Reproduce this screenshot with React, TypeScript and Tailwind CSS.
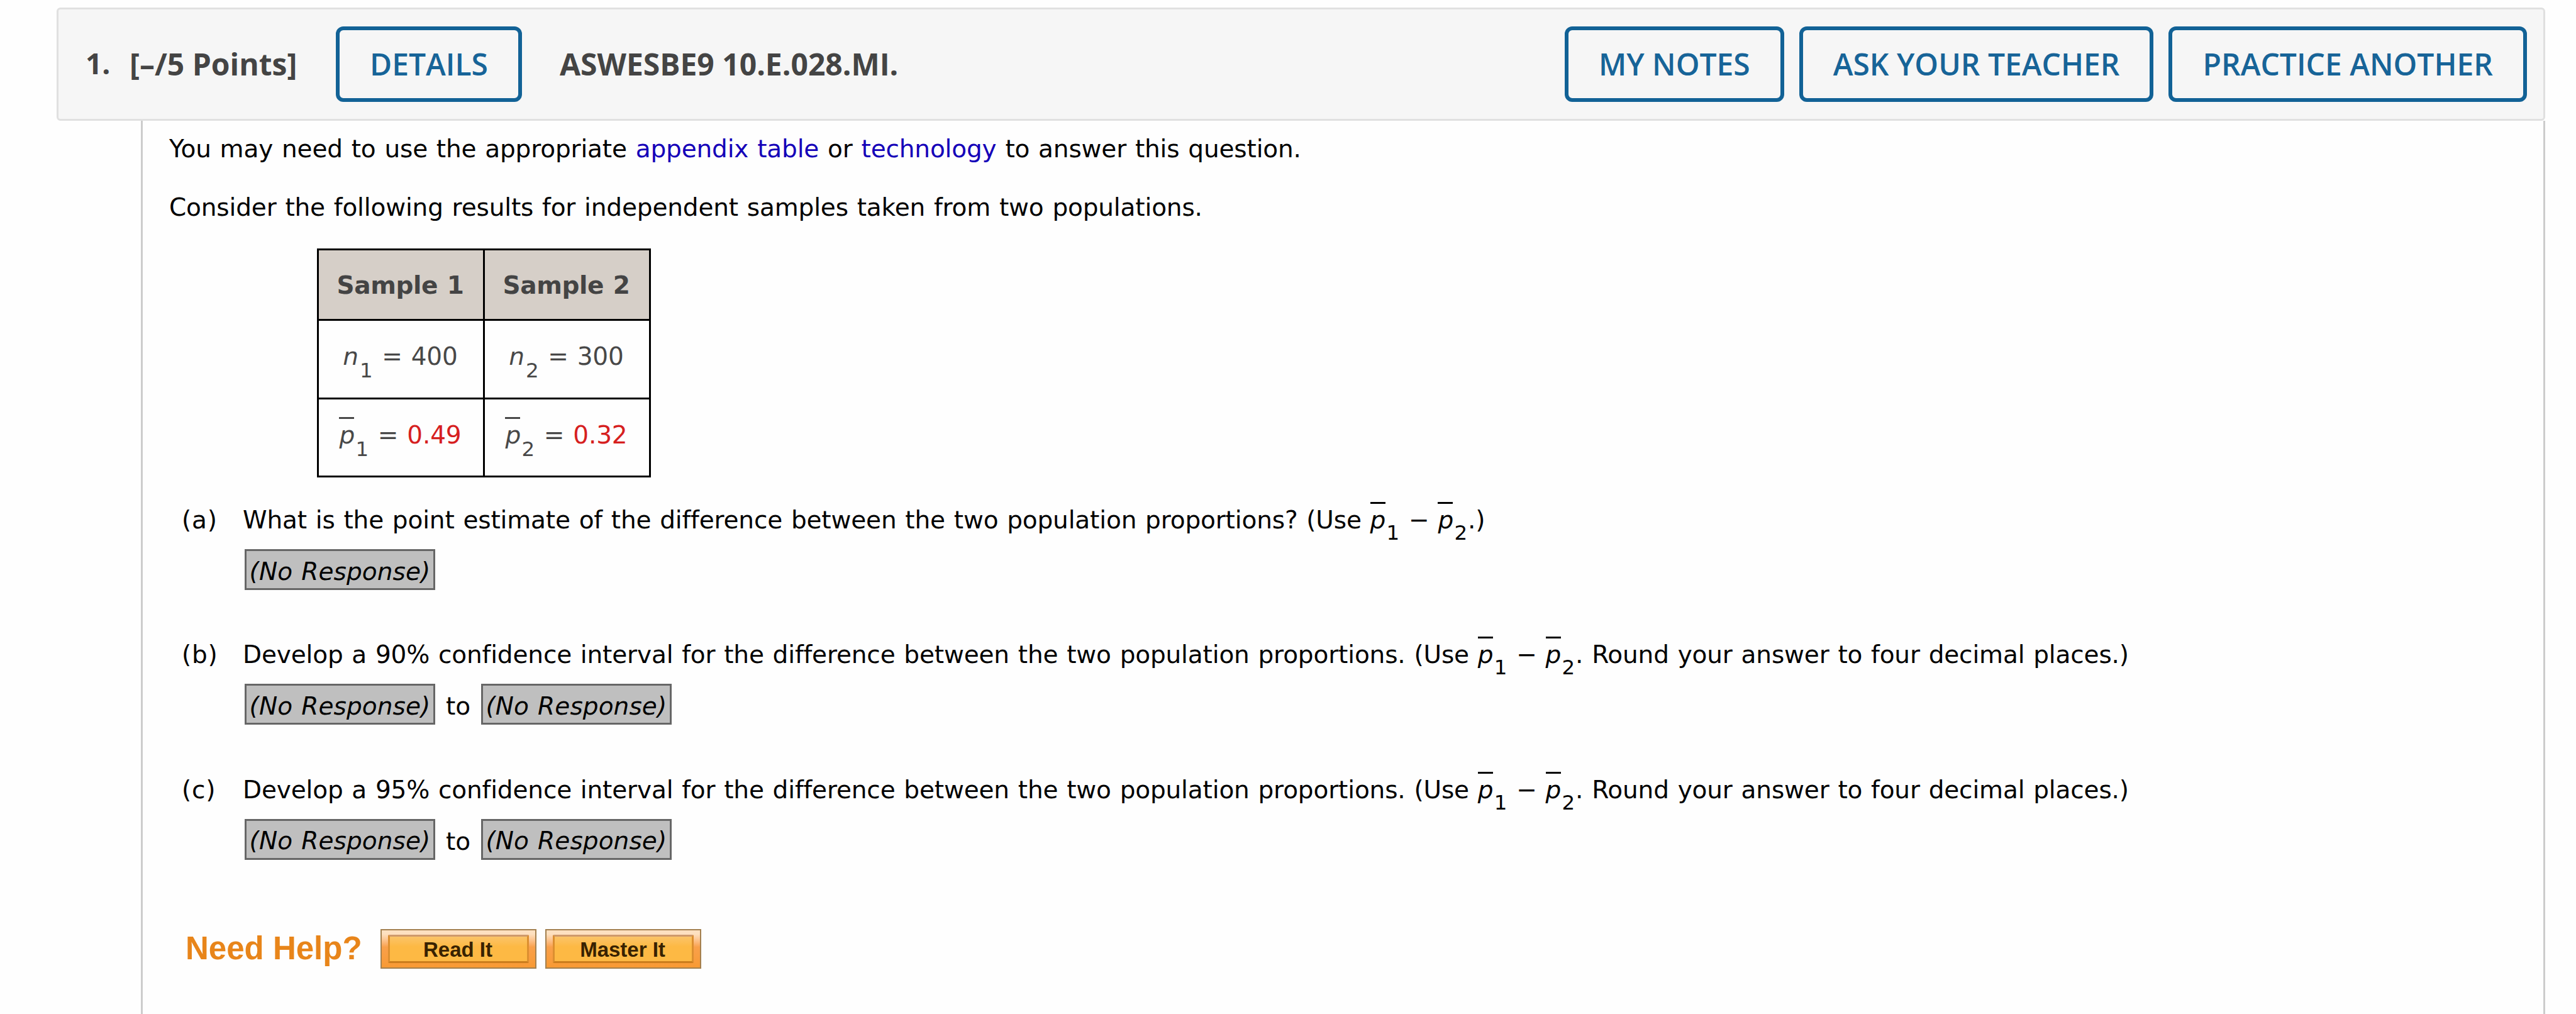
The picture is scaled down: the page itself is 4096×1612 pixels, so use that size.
import type { ReactNode } from "react";

function HeaderButton({ label }: { label: string }) {
  return (
    <button className="h-[120px] px-[48px] border-[6px] border-[#126296] rounded-[12px] text-[#176498] text-[48px] leading-none font-semibold">
      {label}
    </button>
  );
}

function Sub({ index }: { index: number }) {
  return (
    <span className="relative top-[18px] mr-[1px] ml-[2px] text-[32.5px] leading-none in-[td]:top-[20px]">
      {index}
    </span>
  );
}

// p with a bar over it, plus its index
function PBar({ index }: { index: number }) {
  return (
    <>
      <i className="inline-block w-[24px] border-t-3 border-current leading-[51px] -my-[3px]">
        p
      </i>
      <Sub index={index} />
    </>
  );
}

function NoResponse() {
  return (
    <span className="flex h-[65px] w-[303px] items-center justify-center border-3 border-[#666] bg-[#bfbfbf] pt-[6px] italic tracking-[0.1px] whitespace-nowrap">
      (No Response)
    </span>
  );
}

interface PartProps {
  label: string;
  range?: boolean;
  children: ReactNode;
}

function Part({ label, range, children }: PartProps) {
  return (
    <div className="flex h-[214.3px]">
      <div className="w-[97px] tracking-[0.8px]">{label}</div>
      <div>
        <div className="h-[76px] whitespace-nowrap">{children}</div>
        <div className="ml-[3px] flex gap-[17px]">
          <NoResponse />
          {range && (
            <>
              <span className="pt-[6px]">to</span>
              <NoResponse />
            </>
          )}
        </div>
      </div>
    </div>
  );
}

function HelpButton({ label }: { label: string }) {
  return (
    <button className="h-[63px] w-[248px] border-2 border-[#a3804f] bg-linear-to-b from-[#fde0c0] from-10% via-[#f9a04a] via-45% to-[#f89a33] px-[10px] py-[7px]">
      <span className="flex h-full items-center justify-center rounded-[2px] border-3 border-t-[#cf9a6c] border-r-[#dc8f30] border-b-[#cb7d1c] border-l-[#dc8f30] bg-linear-to-b from-[#fbc468] to-[#fdb944] to-40% pt-[2px] pr-[2px] text-[33px] leading-none font-bold text-[#382200]">
        {label}
      </span>
    </button>
  );
}

export default function App() {
  return (
    <div className="flex h-[1612px] w-[4096px] flex-col overflow-hidden bg-[#fefefe] pt-[12px] pr-[49px] pl-[90px]">
      <header className="flex h-[180px] shrink-0 items-center rounded-[6px] border-3 border-[#e0e0e0] bg-[#f6f6f6] pr-[26px] pl-[43px] font-['Open_Sans',sans-serif] text-[48px] font-bold text-[#444]">
        <span className="w-[70px] pb-[4px] text-[46px]">1.</span>
        <span className="w-[328px] whitespace-nowrap">[–/5 Points]</span>
        <HeaderButton label="DETAILS" />
        <span className="ml-[60px]">ASWESBE9 10.E.028.MI.</span>
        <div className="ml-auto flex gap-[24px]">
          <HeaderButton label="MY NOTES" />
          <HeaderButton label="ASK YOUR TEACHER" />
          <HeaderButton label="PRACTICE ANOTHER" />
        </div>
      </header>

      <main className="ml-[134px] flex-1 border-x-3 border-[#ccc] pt-[15px] pl-[42px] font-[Verdana,'DejaVu_Sans',sans-serif] text-[39px] leading-[60px] tracking-[-0.15px] [word-spacing:1.6px] text-black">
        <p>
          You may need to use the appropriate{" "}
          <a className="text-[#1400b8]">appendix table</a> or{" "}
          <a className="text-[#1400b8]">technology</a> to answer this question.
        </p>
        <p className="mt-[33px]">
          Consider the following results for independent samples taken from two
          populations.
        </p>

        <table className="mt-[35px] ml-[235px] w-[531px] table-fixed border-collapse border-3 border-black text-center text-[#484848]">
          <thead>
            <tr className="h-[112px] bg-[#d6cfc8] text-[#444] tracking-[-0.4px]">
              <th className="border-3 border-black pt-[3px] pr-[2px]">Sample 1</th>
              <th className="border-3 border-black pt-[3px] pr-[2px]">Sample 2</th>
            </tr>
          </thead>
          <tbody>
            <tr className="h-[125px]">
              <td className="border-3 border-black pr-[2px] pb-[8px]">
                <i>n</i>
                <Sub index={1} /> = 400
              </td>
              <td className="border-3 border-black pr-[2px] pb-[8px]">
                <i>n</i>
                <Sub index={2} /> = 300
              </td>
            </tr>
            <tr className="h-[124px]">
              <td className="border-3 border-black pr-[2px] pb-[8px]">
                <PBar index={1} /> = <span className="text-[#d6201f]">0.49</span>
              </td>
              <td className="border-3 border-black pr-[2px] pb-[8px]">
                <PBar index={2} /> = <span className="text-[#d6201f]">0.32</span>
              </td>
            </tr>
          </tbody>
        </table>

        <section className="mt-[38px] ml-[20px]">
          <Part label="(a)">
            What is the point estimate of the difference between the two
            population proportions? (Use <PBar index={1} /> −{" "}
            <PBar index={2} />
            .)
          </Part>
          <Part label="(b)" range>
            Develop a 90% confidence interval for the difference between the two
            population proportions. (Use <PBar index={1} /> −{" "}
            <PBar index={2} />. Round your answer to four decimal places.)
          </Part>
          <Part label="(c)" range>
            Develop a 95% confidence interval for the difference between the two
            population proportions. (Use <PBar index={1} /> −{" "}
            <PBar index={2} />. Round your answer to four decimal places.)
          </Part>
        </section>

        <div className="mt-[37px] ml-[26px] flex items-center font-['Liberation_Sans',Arial,sans-serif] tracking-normal [word-spacing:0px]">
          <span className="w-[310px] text-[51px] font-bold text-[#e8851a]">
            Need Help?
          </span>
          <div className="flex gap-[14px]">
            <HelpButton label="Read It" />
            <HelpButton label="Master It" />
          </div>
        </div>
      </main>
    </div>
  );
}
